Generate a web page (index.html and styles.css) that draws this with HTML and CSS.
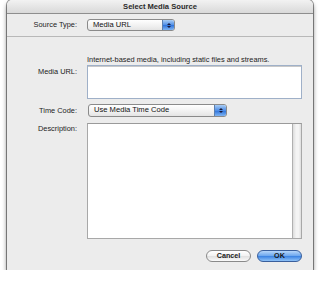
FILE: index.html
```html
<!DOCTYPE html>
<html lang="en">
<head>
  <meta charset="UTF-8">
  <title>Select Media Source</title>
  <link rel="stylesheet" href="styles.css">
</head>
<body>
  <div class="window">
    <div class="titlebar">Select Media Source</div>
    <div class="top">
      <div class="row row-source">
        <span class="label">Source Type:</span>
        <div class="popup popup-source">
          <span class="popup-text">Media URL</span>
          <span class="popup-arrows"><i class="up"></i><i class="down"></i></span>
        </div>
      </div>
    </div>
    <div class="form">
      <div class="row row-note">
        <span class="label"></span>
        <span class="note">Internet-based media, including static files and streams.</span>
      </div>
      <div class="row row-url">
        <span class="label label-top">Media URL:</span>
        <div class="field"></div>
      </div>
      <div class="row row-time">
        <span class="label">Time Code:</span>
        <div class="popup popup-time">
          <span class="popup-text">Use Media Time Code</span>
          <span class="popup-arrows"><i class="up"></i><i class="down"></i></span>
        </div>
      </div>
      <div class="row row-desc">
        <span class="label label-desc">Description:</span>
        <div class="textarea">
          <div class="text-body"></div>
          <div class="scrollbar"></div>
        </div>
      </div>
      <div class="buttons">
        <button class="btn btn-cancel">Cancel</button>
        <button class="btn btn-ok">OK</button>
      </div>
    </div>
  </div>
</body>
</html>
```
FILE: styles.css
```css
html,body{
  margin : 0;
  padding : 0;
  background : #ffffff;
  font-family : "Liberation Sans", Arial, sans-serif;
  font-size : 7.4px;
  color : #222222;
}
.window{
  width : 306px;
  height : 270px;
  margin-left : 7px;
  background : #ececec;
  border-radius : 5px 5px 0 0;
  box-shadow : 0 3px 5px rgba(0,0,0,.55), 0 0 0 1px #9a9a9a;
  overflow : hidden;
}
.titlebar{
  height : 13px;
  line-height : 13px;
  text-align : center;
  font-weight : bold;
  font-size : 7.6px;
  color : #2a2a2a;
  background : linear-gradient(#f2f2f2, #d9d9d9);
  border-bottom : 1px solid #8e8e8e;
}
.top{
  padding : 5px 0 5px;
  border-bottom : 1px solid #b8b8b8;
}
.row{
  display : flex;
  align-items : center;
}
.label{
  width : 70px;
  margin-right : 10px;
  text-align : right;
  line-height : 8px;
  flex-shrink : 0;
}
.popup{
  display : flex;
  height : 12px;
  border : 1px solid #8a8a8a;
  border-radius : 3px;
  background : linear-gradient(#ffffff, #f0f0f0 60%, #e4e4e4);
  box-sizing : border-box;
  overflow : hidden;
}
.popup-source{
  width : 88px;
}
.popup-time{
  width : 139px;
  height : 13px;
  margin-left : 1px;
}
.popup-text{
  flex : 1;
  padding-left : 5px;
  line-height : 10px;
  font-size : 7.6px;
  color : #111111;
}
.popup-arrows{
  width : 11px;
  display : flex;
  flex-direction : column;
  align-items : center;
  justify-content : center;
  gap : 1px;
  background : linear-gradient(#a9cdf5, #4f8ee6 50%, #3276dc 55%, #7fb4f2);
  border-left : 1px solid #5b7fb0;
}
.popup-arrows i{
  width : 0;
  height : 0;
  border-left : 2px solid transparent;
  border-right : 2px solid transparent;
}
.popup-arrows .up{
  border-bottom : 2px solid #1a1a3a;
}
.popup-arrows .down{
  border-top : 2px solid #1a1a3a;
}
.form{
  padding-top : 19px;
}
.row-note{
  height : 8px;
}
.note{
  line-height : 8px;
}
.row-url{
  margin-top : 1px;
  align-items : flex-start;
}
.label-top{
  padding-top : 3px;
}
.field{
  width : 215px;
  height : 34px;
  box-sizing : border-box;
  background : #ffffff;
  border : 1px solid #9fb0c8;
  box-shadow : inset 0 1px 0 #c8c8c8;
}
.row-time{
  margin-top : 5px;
}
.row-desc{
  margin-top : 6px;
  align-items : flex-start;
}
.label-desc{
  padding-top : 2px;
}
.textarea{
  width : 215px;
  height : 116px;
  box-sizing : border-box;
  display : flex;
  border : 1px solid #a8a8a8;
  border-top-color : #9a9a9a;
  background : #ffffff;
}
.text-body{
  flex : 1;
}
.scrollbar{
  width : 8px;
  background : linear-gradient(90deg, #dcdcdc, #f4f4f4 40%, #f4f4f4 70%, #dedede);
  border-left : 1px solid #b0b0b0;
}
.buttons{
  display : flex;
  justify-content : flex-end;
  gap : 6px;
  margin-top : 11px;
  padding-right : 11px;
}
.btn{
  width : 45px;
  height : 12px;
  padding : 0;
  border-radius : 6px;
  font-family : "Liberation Sans", Arial, sans-serif;
  font-size : 7.2px;
  font-weight : bold;
  line-height : 10px;
  color : #1a1a1a;
  box-sizing : border-box;
}
.btn-cancel{
  border : 1px solid #8a8a8a;
  background : linear-gradient(#ffffff, #f2f2f2 50%, #e2e2e2 55%, #fafafa);
}
.btn-ok{
  border : 1px solid #3a5f9c;
  background : linear-gradient(#b6d6fa, #6aa5ee 50%, #3f86e4 55%, #8fc2f7);
}
```
